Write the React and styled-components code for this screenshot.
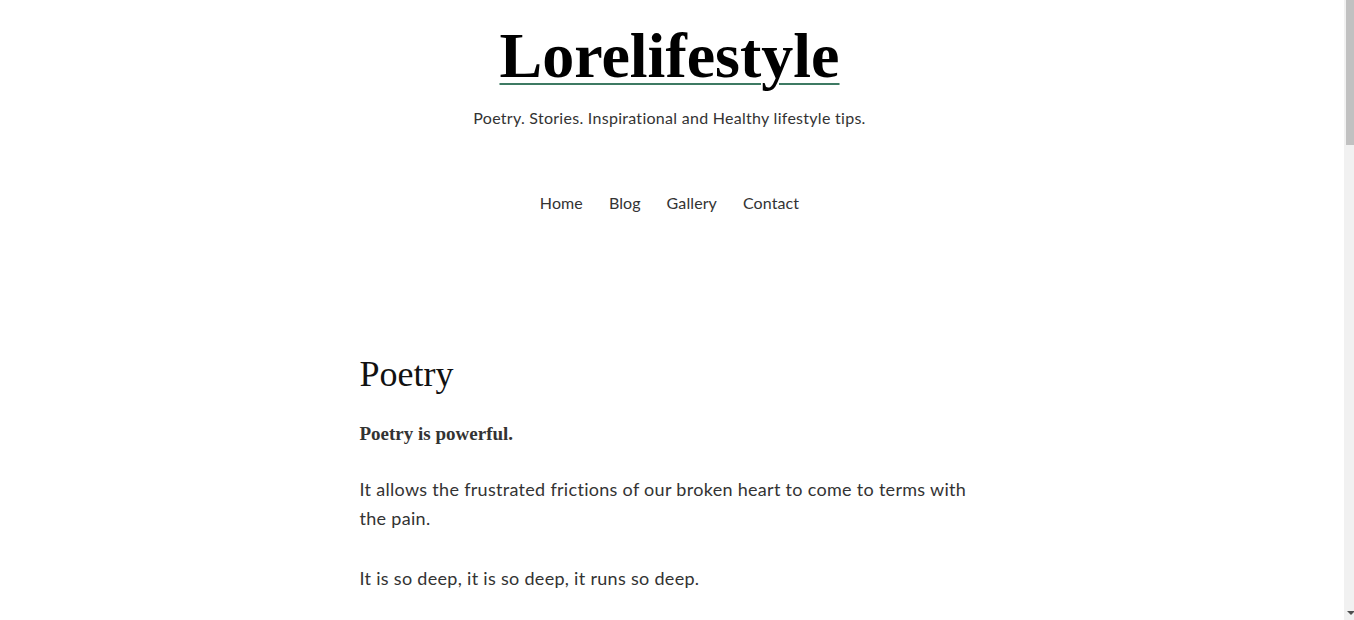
import styled, { createGlobalStyle } from "styled-components";

const GlobalStyle = createGlobalStyle`
  html, body {
    margin: 0;
    padding: 0;
    background: #fff;
  }
  body {
    font-family: Lato, "Noto Sans", sans-serif;
    color: #333;
  }
`;

// page area left of the (drawn) browser scrollbar
const Page = styled.div`
  min-height: 2650px;
  padding-right: 15px;
`;

const ScrollTrack = styled.div`
  position: fixed;
  top: 0;
  right: 0;
  width: 10px;
  height: 100vh;
  background: #f1f1f1;
`;

const ScrollThumb = styled.div`
  margin-left: 2px;
  height: 145px;
  background: #c1c1c1;
`;

const ScrollArrow = styled.div`
  position: absolute;
  bottom: 5px;
  left: 3px;
  width: 0;
  height: 0;
  border-left: 4px solid transparent;
  border-right: 4px solid transparent;
  border-top: 4px solid #505050;
`;

const Header = styled.header`
  padding-top: 18px;
  text-align: center;
`;

const Title = styled.h1`
  margin: 0;
  font-family: "Liberation Serif", "DejaVu Serif", serif;
  font-size: 64px;
  line-height: 1.2;
  font-weight: 700;
`;

const TitleLink = styled.a`
  color: #000;
  text-decoration: underline;
  text-decoration-color: #3d7a63;
  text-decoration-thickness: 2px;
  text-underline-offset: 6px;
`;

const Tagline = styled.p`
  margin: 11px 0 0;
  font-size: 16px;
  line-height: 24px;
  letter-spacing: 0.28px;
  color: #333;
`;

const Nav = styled.nav`
  display: flex;
  justify-content: center;
  gap: 26px;
  margin-top: 61px;
`;

const NavLink = styled.a`
  font-size: 16px;
  line-height: 24px;
  letter-spacing: 0.1px;
  color: #333;
  text-decoration: none;
`;

const Main = styled.main`
  width: 620px;
  margin: 136px auto 0;
`;

const Heading = styled.h2`
  margin: 0;
  font-family: "Liberation Serif", "DejaVu Serif", serif;
  font-size: 36px;
  line-height: 47px;
  font-weight: 400;
  color: #111;
`;

const Lead = styled.p`
  margin: 21px 0 26px;
  font-family: "Liberation Serif", "DejaVu Serif", serif;
  font-size: 19px;
  line-height: 30px;
  font-weight: 700;
  color: #333;
`;

const Text = styled.p`
  margin: 0 0 31px;
  font-size: 18px;
  line-height: 29px;
  letter-spacing: 0.3px;
  color: #333;
`;

const links = ["Home", "Blog", "Gallery", "Contact"];

export default function App() {
  return (
    <Page>
      <GlobalStyle />
      <Header>
        <Title>
          <TitleLink href="#">Lorelifestyle</TitleLink>
        </Title>
        <Tagline>Poetry. Stories. Inspirational and Healthy lifestyle tips.</Tagline>
        <Nav>
          {links.map((l) => (
            <NavLink key={l} href="#">{l}</NavLink>
          ))}
        </Nav>
      </Header>
      <Main>
        <Heading>Poetry</Heading>
        <Lead>Poetry is powerful.</Lead>
        <Text>
          It allows the frustrated frictions of our broken heart to come to terms with the pain.
        </Text>
        <Text>It is so deep, it is so deep, it runs so deep.</Text>
      </Main>
      <ScrollTrack>
        <ScrollThumb />
        <ScrollArrow />
      </ScrollTrack>
    </Page>
  );
}
